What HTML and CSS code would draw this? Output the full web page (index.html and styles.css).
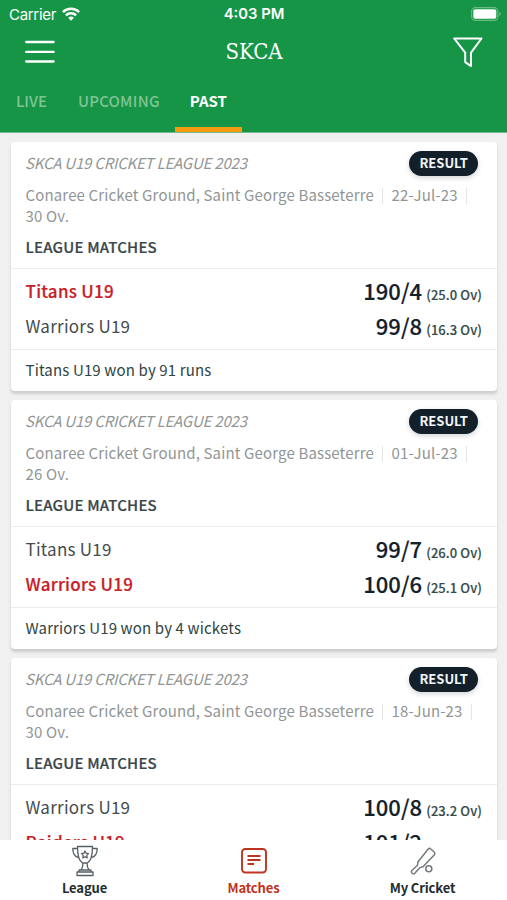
FILE: index.html
```html
<!DOCTYPE html>
<html lang="en">
<head>
<meta charset="utf-8">
<title>SKCA</title>
<link rel="stylesheet" href="styles.css">
</head>
<body>
<div class="app">
  <header class="header">
    <div class="status">
      <div class="carrier"><span>Carrier</span>
        <svg width="18" height="14" viewBox="0 0 18 14" fill="none" stroke="#fff" stroke-width="2.5"><path d="M.9 5.1a11.6 11.6 0 0 1 16.2 0M3.9 8.3a7.3 7.3 0 0 1 10.2 0"/><path d="M9 13.7 6.1 10.8a4.2 4.2 0 0 1 5.8 0z" fill="#fff" stroke="none"/></svg>
      </div>
      <div class="clock">4:03 PM</div>
      <svg class="battery" width="31" height="14" viewBox="0 0 31 14"><rect x=".6" y=".6" width="26.3" height="12.8" rx="3.8" fill="none" stroke="#6dbb84" stroke-width="1.1"/><rect x="2.3" y="2.3" width="23" height="9.4" rx="2" fill="#fff"/><path d="M28.3 4.8q3 2.2 0 4.4z" fill="#6dbb84"/></svg>
    </div>
    <div class="bar">
      <svg width="30" height="24" viewBox="0 0 30 24" stroke="#fff" stroke-width="2.3" stroke-linecap="round"><path d="M1.2 2h27.4M1.2 11.9h27.4M1.2 21.5h27.4"/></svg>
      <h1 class="title">SKCA</h1>
      <svg width="30" height="31" viewBox="0 0 30 31" fill="none" stroke="#fff" stroke-width="2" stroke-linejoin="round"><path d="M1.2 1.5h27.3L18 15.6v13.5l-5.8-4V15.6z"/></svg>
    </div>
    <nav class="tabs"><a class="tab">LIVE</a><a class="tab upcoming">UPCOMING</a><a class="tab active">PAST</a></nav>
  </header>
  <main class="list">
    <article class="card">
      <div class="info">
        <div class="top"><span class="league">SKCA U19 CRICKET LEAGUE 2023</span><span class="badge">RESULT</span></div>
        <p class="venue">Conaree Cricket Ground, Saint George Basseterre<i class="sep"></i>22-Jul-23<i class="sep"></i><br>30 Ov.</p>
        <div class="stage">LEAGUE MATCHES</div>
      </div>
      <div class="teams">
        <div class="row"><span class="team won">Titans U19</span><span class="score">190/4 <small>(25.0 Ov)</small></span></div>
        <div class="row"><span class="team">Warriors U19</span><span class="score">99/8 <small>(16.3 Ov)</small></span></div>
      </div>
      <div class="result">Titans U19 won by 91 runs</div>
    </article>
    <article class="card">
      <div class="info">
        <div class="top"><span class="league">SKCA U19 CRICKET LEAGUE 2023</span><span class="badge">RESULT</span></div>
        <p class="venue">Conaree Cricket Ground, Saint George Basseterre<i class="sep"></i>01-Jul-23<i class="sep"></i><br>26 Ov.</p>
        <div class="stage">LEAGUE MATCHES</div>
      </div>
      <div class="teams">
        <div class="row"><span class="team">Titans U19</span><span class="score">99/7 <small>(26.0 Ov)</small></span></div>
        <div class="row"><span class="team won">Warriors U19</span><span class="score">100/6 <small>(25.1 Ov)</small></span></div>
      </div>
      <div class="result">Warriors U19 won by 4 wickets</div>
    </article>
    <article class="card">
      <div class="info">
        <div class="top"><span class="league">SKCA U19 CRICKET LEAGUE 2023</span><span class="badge">RESULT</span></div>
        <p class="venue">Conaree Cricket Ground, Saint George Basseterre<i class="sep"></i>18-Jun-23<i class="sep"></i><br>30 Ov.</p>
        <div class="stage">LEAGUE MATCHES</div>
      </div>
      <div class="teams">
        <div class="row"><span class="team">Warriors U19</span><span class="score">100/8 <small>(23.2 Ov)</small></span></div>
        <div class="row"><span class="team won">Raiders U19</span><span class="score">101/2 <small>(14.2 Ov)</small></span></div>
      </div>
    </article>
  </main>
  <footer class="nav">
    <a class="item"><svg width="30" height="32" viewBox="0 0 30 32" fill="none" stroke="#566065" stroke-width="1.3" stroke-linejoin="round"><path d="M7.500 1.500h15c0 10-1.500 14.500-5 16.500h-5C9 16 7.500 11.500 7.500 1.500zM7.500 3.500H2.800c0 6 2.500 8.500 6 9M22.500 3.500h4.700c0 6-2.500 8.500-6 9M13 18c0 3-.5 5-2 7h8c-1.500-2-2-4-2-7M9 25h12v2H9zM7 27h16v3.500H7z"/><path d="m15 6 1.100 2.200 2.400.4-1.700 1.800.4 2.500-2.200-1.200-2.200 1.200.4-2.500-1.700-1.800 2.400-.4z"/></svg><span>League</span></a>
    <a class="item on"><svg width="30" height="32" viewBox="0 0 30 32" fill="none" stroke="currentColor" stroke-width="1.9"><rect x="3" y="4" width="24" height="23.5" rx="3.2"/><path d="M8.500 11h13M8.500 15h13M8.500 19h6.500"/></svg><span>Matches</span></a>
    <a class="item"><svg width="30" height="32" viewBox="0 0 30 32" fill="none" stroke="#73797c" stroke-width="1.5" stroke-linejoin="round"><path d="M20.200 4q1.300-1.200 2.600 0l3.400 3q1.200 1.200.2 2.700L15 21.800l-3 .8-5.200 5.700q-1.500 1-2.800-.1t-.2-2.700l5.700-5.200.4-3.300z"/><circle cx="20.800" cy="23.800" r="3"/></svg><span>My Cricket</span></a>
  </footer>
</div>
</body>
</html>
```
FILE: styles.css
```css
* { box-sizing: border-box; }
body { margin: 0; background: #f0f0f0; font-family: "Noto Sans CJK SC", "Noto Sans", sans-serif; }
.app { width: 507px; height: 900px; display: flex; flex-direction: column; overflow: hidden; }
.header { height: 133px; flex: none; background: #169546; color: #fff; display: flex; flex-direction: column; border-bottom: 1px solid #75b98c; }
.status { height: 27px; padding: 0 5px 0 9px; display: grid; grid-template-columns: 1fr auto 1fr; align-items: center; font: 15px/27px Inter, sans-serif; }
.carrier { display: flex; align-items: center; gap: 6px; letter-spacing: -.3px; }
.carrier svg { margin-top: -2px; }
.clock { font-weight: 600; font-size: 14.8px; line-height: 29px; margin-right: 3px; }
.battery { justify-self: end; margin-top: -1px; }
.bar { height: 50px; padding: 0 24px 0 25px; display: flex; align-items: center; justify-content: space-between; }
.title { margin: 0; font: 22px/50px "DejaVu Serif Condensed", "DejaVu Serif", serif; font-stretch: condensed; }
.tabs { flex: 1; display: flex; font-size: 15px; line-height: 47px; font-weight: 500; }
.tab { padding: 0 15px 0 16px; color: #80c496; }
.upcoming { letter-spacing: .25px; }
.tab.active { color: #fff; font-weight: 600; border-bottom: 5px solid #f39c12; padding: 0 15px; }
.list { flex: 1; min-height: 0; overflow: hidden; padding: 9px 10px 0 11px; }
.card { height: 249px; margin-bottom: 8.8px; background: #fff; border-radius: 4px; box-shadow: 0 3px 3px #00000026; }
.info { height: 127px; padding: 9px 15px 0; border-bottom: 1px solid #ececec; color: #919595; }
.top { height: 25px; padding-right: 4px; display: flex; align-items: center; justify-content: space-between; }
.league { margin: -2px 0 0 -1px; font-size: 15px; letter-spacing: -.21px; font-style: italic; }
.badge { height: 25px; padding: 0 10px; border-radius: 13px; background: #13202a; color: #f1f5f7; font-size: 13px; line-height: 24px; font-weight: 600; box-shadow: 0 2px 5px #13202a30; }
.venue { margin: 8px 0 0 -.5px; font-size: 15px; line-height: 21px; letter-spacing: .15px; white-space: nowrap; }
.sep { display: inline-block; width: 1px; height: 16px; margin: 0 8.3px; background: #e5e5e5; vertical-align: -3px; }
.stage { margin: 10px 0 0 -.5px; color: #3c474b; font-size: 15px; line-height: 22px; letter-spacing: .18px; font-weight: 500; -webkit-text-stroke: .2px; }
.teams { height: 81px; padding: 5px 15px 0; border-bottom: 1px solid #ececec; }
.row { height: 35px; display: flex; align-items: center; justify-content: space-between; }
.team { margin: -2px 0 0 -.5px; font-size: 17px; letter-spacing: .25px; color: #444c50; }
.won { color: #c91d28; font-weight: 500; -webkit-text-stroke: .2px; }
.score { margin-top: 2px; font-size: 22px; font-weight: 500; color: #13202a; line-height: 35px; -webkit-text-stroke: .15px; }
small { font-size: 13px; letter-spacing: .07px; margin-left: -.8px; color: #354b4b; }
.result { padding: 0 14.5px; font-size: 15px; line-height: 39px; letter-spacing: .15px; color: #2f4542; }
.nav { height: 60px; flex: none; background: #fff; display: grid; grid-template-columns: repeat(3, 1fr); }
.item { display: flex; flex-direction: column; align-items: center; padding-top: 5px; color: #222b30; font-size: 13px; line-height: 22px; letter-spacing: -.12px; font-weight: 600; }
.on { color: #bf3420; }
```
